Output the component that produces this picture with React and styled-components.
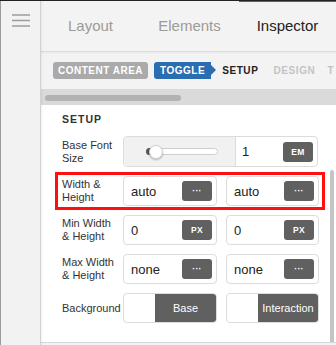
import React from "react";
import styled, { createGlobalStyle } from "styled-components";

const Global = createGlobalStyle`
  html, body { margin: 0; padding: 0; background: #f3f3f3; }
  body { font-family: "Liberation Sans", Arial, sans-serif; }
  * { box-sizing: border-box; }
`;

const Root = styled.div`
  width: 336px;
  height: 345px;
  display: flex;
  overflow: hidden;
  border-top: 1px solid #222;
  background: #f3f3f3;
`;

const Sidebar = styled.div`
  width: 41px;
  flex: none;
  background: #f2f2f2;
  border-left: 1px solid #9a9a9a;
  border-right: 1px solid #d2d2d2;
  box-shadow: 1px 0 2px rgba(0,0,0,0.06);
  padding: 12px 0 0 10px;
  position: relative;
  z-index: 2;
`;

const Main = styled.div`
  flex: 1;
  display: flex;
  flex-direction: column;
  min-width: 0;
`;

const Tabs = styled.div`
  height: 51px;
  display: flex;
  border-bottom: 1px solid #dcdcdc;
  box-shadow: 0 1px 2px rgba(0,0,0,0.05);
  background: #f3f3f3;
  position: relative;
  z-index: 1;
`;

const Tab = styled.div`
  width: ${p => p.$w ? p.$w + "px" : "auto"};
  flex: ${p => p.$w ? "none" : "1"};
  display: flex;
  align-items: center;
  justify-content: center;
  font-size: 15px;
  color: ${p => p.$active ? "#222" : "#9b9b9b"};
  position: relative;
  padding-bottom: 1px;
  &::before {
    content: "";
    display: ${p => p.$active ? "block" : "none"};
    position: absolute;
    left: 0; right: 0; top: -1px;
    height: 2px;
    background: #2a6db0;
  }
`;

const Crumbs = styled.div`
  height: 37px;
  display: flex;
  align-items: center;
  padding-left: 12px;
  white-space: nowrap;
  overflow: hidden;
`;

const Pill = styled.div`
  height: 17px;
  display: flex;
  align-items: center;
  padding: 0 ${p => p.$blue ? 6 : 5}px;
  border-radius: 3px;
  background: ${p => p.$blue ? "#2a6db0" : "#aaaaaa"};
  color: #fff;
  font-size: 10px;
  font-weight: bold;
  letter-spacing: 0.5px;
  margin-right: ${p => p.$mr}px;
  flex: none;
  position: relative;
  ${p => p.$blue && `
    border-radius: 3px 0 0 3px;
    &::after {
      content: "";
      position: absolute;
      right: -5px;
      top: 3px;
      border-left: 5px solid #2a6db0;
      border-top: 5.5px solid transparent;
      border-bottom: 5.5px solid transparent;
    }
  `}
`;

const Crumb = styled.div`
  font-size: 10px;
  font-weight: bold;
  letter-spacing: 0.6px;
  flex: none;
  color: ${p => p.$active ? "#222" : "#c4c4c4"};
  margin-right: ${p => p.$mr}px;
`;

const HScroll = styled.div`
  height: 16px;
  background: #dadada;
  padding: 6px 0 0 4px;
`;

const HThumb = styled.div`
  width: 136px;
  height: 6px;
  border-radius: 3px;
  background: #b2b2b2;
`;

const Content = styled.div`
  flex: 1;
  background: #fff;
  border-bottom: 1px solid #d6d6d6;
  margin-bottom: 2px;
  position: relative;
  padding: 7px 0 0 14px;
`;

const VThumb = styled.div`
  position: absolute;
  right: 2px;
  top: 65px;
  bottom: 0;
  width: 4px;
  border-radius: 2px 2px 0 0;
  background: #c4c4c4;
`;

const Heading = styled.div`
  font-size: 10.5px;
  font-weight: bold;
  letter-spacing: 1px;
  color: #333;
  line-height: 14px;
  padding-left: 7px;
  margin-bottom: 6px;
`;

const Rows = styled.div`
  display: flex;
  flex-direction: column;
  gap: 1px;
`;

const Row = styled.div`
  width: 270px;
  display: flex;
  align-items: center;
  padding: 1px 4px;
  border: 3px solid ${p => p.$hl ? "#ff1010" : "transparent"};
`;

const Label = styled.div`
  width: 61px;
  flex: none;
  font-size: 11px;
  line-height: 13px;
  color: #333;
  padding-right: 4px;
`;

const Controls = styled.div`
  display: flex;
  gap: 9px;
`;

const Field = styled.div`
  width: ${p => p.$w}px;
  height: 30px;
  border: 1px solid #dcdcdc;
  border-radius: 4px;
  display: flex;
  align-items: center;
  justify-content: space-between;
  padding: 0 4px 0 7px;
  font-size: 13px;
  color: #222;
  background: #fff;
`;

const Btn = styled.div`
  width: 30px;
  height: 20px;
  border-radius: 3px;
  background: #606060;
  color: #fff;
  font-size: 8.5px;
  font-weight: bold;
  display: flex;
  align-items: center;
  justify-content: center;
  letter-spacing: 0.3px;
`;

const Combo = styled.div`
  width: 196px;
  height: 31px;
  border: 1px solid #dcdcdc;
  border-radius: 4px;
  display: flex;
  overflow: hidden;
`;

const SliderPart = styled.div`
  width: 112px;
  background: #f1f1f1;
  border-right: 1px solid #dcdcdc;
  display: flex;
  align-items: center;
  padding-left: 22px;
  position: relative;
`;

const Track = styled.div`
  width: 72px;
  height: 7px;
  border: 1px solid #cfcfcf;
  border-radius: 4px;
  background: #fff;
  position: relative;
`;

const Fill = styled.div`
  position: absolute;
  left: -1px; top: -1px; bottom: -1px;
  width: 6px;
  border-radius: 4px 0 0 4px;
  background: #555;
`;

const Knob = styled.div`
  position: absolute;
  left: 2px;
  top: 50%;
  width: 14px;
  height: 14px;
  margin-top: -7px;
  border-radius: 50%;
  background: #fff;
  border: 1px solid #d0d0d0;
  box-shadow: 0 1px 2px rgba(0,0,0,0.25);
`;

const NumPart = styled.div`
  flex: 1;
  display: flex;
  align-items: center;
  justify-content: space-between;
  padding: 0 4px 0 6px;
  font-size: 13px;
  color: #222;
`;

const Toggle = styled.div`
  width: ${p => p.$w}px;
  height: 30px;
  border: 1px solid #dcdcdc;
  border-radius: 4px;
  display: flex;
  overflow: hidden;
  background: #fff;
`;

const ToggleOn = styled.div`
  width: ${p => p.$w}px;
  margin-left: auto;
  background: #606060;
  color: #fff;
  font-size: 11px;
  display: flex;
  align-items: center;
  justify-content: center;
`;

const Menu = () => (
  <svg width="19" height="14" viewBox="0 0 19 14">
    <g stroke="#9c9c9c" strokeWidth="1.5">
      <line x1="1" y1="2" x2="19" y2="2" />
      <line x1="1" y1="7.5" x2="19" y2="7.5" />
      <line x1="1" y1="13" x2="19" y2="13" />
    </g>
  </svg>
);

export default function App() {
  return (
    <>
      <Global />
      <Root>
        <Sidebar><Menu /></Sidebar>
        <Main>
          <Tabs>
            <Tab $w={99}>Layout</Tab>
            <Tab $w={99}>Elements</Tab>
            <Tab $active>Inspector</Tab>
          </Tabs>
          <Crumbs>
            <Pill $mr={6}>CONTENT AREA</Pill>
            <Pill $blue $mr={11}>TOGGLE</Pill>
            <Crumb $active $mr={15}>SETUP</Crumb>
            <Crumb $mr={12}>DESIGN</Crumb>
            <Crumb>T</Crumb>
          </Crumbs>
          <HScroll><HThumb /></HScroll>
          <Content>
            <VThumb />
            <Heading>SETUP</Heading>
            <Rows>
              <Row>
                <Label>Base Font Size</Label>
                <Combo>
                  <SliderPart>
                    <Track><Fill /><Knob /></Track>
                  </SliderPart>
                  <NumPart>1<Btn>EM</Btn></NumPart>
                </Combo>
              </Row>
              <Row $hl>
                <Label>Width &amp; Height</Label>
                <Controls>
                  <Field $w={94}>auto<Btn>···</Btn></Field>
                  <Field $w={93}>auto<Btn>···</Btn></Field>
                </Controls>
              </Row>
              <Row>
                <Label>Min Width &amp; Height</Label>
                <Controls>
                  <Field $w={94}>0<Btn>PX</Btn></Field>
                  <Field $w={93}>0<Btn>PX</Btn></Field>
                </Controls>
              </Row>
              <Row>
                <Label>Max Width &amp; Height</Label>
                <Controls>
                  <Field $w={94}>none<Btn>···</Btn></Field>
                  <Field $w={93}>none<Btn>···</Btn></Field>
                </Controls>
              </Row>
              <Row>
                <Label>Background</Label>
                <Controls>
                  <Toggle $w={94}><ToggleOn $w={61}>Base</ToggleOn></Toggle>
                  <Toggle $w={93}><ToggleOn $w={60}>Interaction</ToggleOn></Toggle>
                </Controls>
              </Row>
            </Rows>
          </Content>
        </Main>
      </Root>
    </>
  );
}
